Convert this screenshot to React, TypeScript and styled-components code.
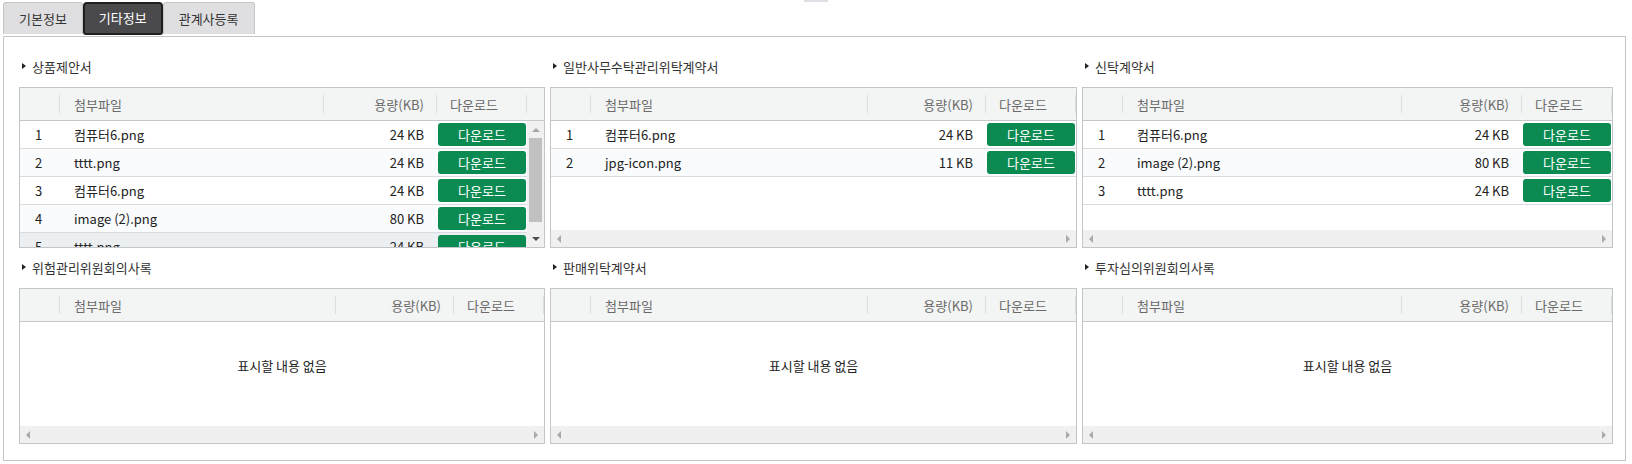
import React from 'react';
import styled, { createGlobalStyle, css } from 'styled-components';

const GlobalStyle = createGlobalStyle`
  html, body { margin: 0; padding: 0; background: #fff; }
  body {
    font-family: "Noto Sans CJK KR", "Noto Sans", sans-serif;
    font-size: 13px;
    color: #222;
  }
  * { box-sizing: border-box; }
`;

const Page = styled.div`
  position: relative;
  padding: 2px 6px 0 3px;
`;

const TopHandle = styled.div`
  position: absolute;
  top: 0;
  left: 50%;
  width: 24px;
  height: 2px;
  margin-left: -12px;
  background: #dde0e4;
`;

const TabBar = styled.div`
  display: flex;
  align-items: flex-start;
  height: 32px;
`;

const Tab = styled.button<{ $active?: boolean }>`
  height: 32px;
  padding: 0 15px;
  font: inherit;
  font-size: 13px;
  line-height: 1;
  cursor: pointer;
  border: 1px solid #c6c6c6;
  border-bottom: none;
  border-radius: 3px 3px 0 0;
  background: #dfdfe1;
  color: #333;
  ${(p) =>
    p.$active &&
    css`
      height: 33px;
      padding: 0 14px 3px;
      background: #4a4a4c;
      color: #fff;
      border: 2px solid #1f1f1f;
      border-radius: 4px 4px 3px 3px;
    `}
`;

const Panel = styled.div`
  margin-top: 2px;
  border: 1px solid #c4c4c4;
  padding: 19px 12px 16px 15px;
  display: grid;
  grid-template-columns: 526fr 527fr 531fr;
  column-gap: 5px;
  row-gap: 9px;
`;

const Section = styled.section`
  display: flex;
  flex-direction: column;
  min-width: 0;
`;

const SectionTitle = styled.h3`
  margin: 0 0 11px;
  height: 20px;
  display: flex;
  align-items: center;
  gap: 6px;
  padding-left: 3px;
  font-size: 13px;
  font-weight: normal;
  color: #333;
  &::before {
    content: '';
    border-left: 4px solid #222;
    border-top: 3.5px solid transparent;
    border-bottom: 3.5px solid transparent;
  }
`;

const GridBox = styled.div<{ $h: number }>`
  height: ${(p) => p.$h}px;
  border: 1px solid #c3c6c9;
  display: flex;
  flex-direction: column;
  background: #fff;
  overflow: hidden;
`;

type Kind = 'no' | 'name' | 'size' | 'dl';

const colStyles: Record<Kind, ReturnType<typeof css>> = {
  no: css`
    flex: 0 0 40px;
    padding-left: 15px;
  `,
  name: css`
    flex: 0 0 calc((100% - 130px) * 0.7);
    padding-left: 14px;
  `,
  size: css`
    flex: 1 1 0;
    justify-content: flex-end;
    padding-right: 13px;
  `,
  dl: css`
    flex: 0 0 90px;
    padding-left: 13px;
  `,
};

const HeadRow = styled.div<{ $scroll?: boolean }>`
  height: 33px;
  flex: none;
  display: flex;
  background: #f3f4f4;
  border-bottom: 1px solid #c5c8cb;
  color: #6a6a6a;
  padding-right: ${(p) => (p.$scroll ? 17 : 0)}px;
`;

const HeadCell = styled.div<{ $kind: Kind }>`
  position: relative;
  display: flex;
  align-items: center;
  min-width: 0;
  white-space: nowrap;
  ${(p) => colStyles[p.$kind]}
  &::after {
    content: '';
    position: absolute;
    right: 0;
    top: 7px;
    width: 1px;
    height: 18px;
    background: #dcdddf;
  }
`;

const Body = styled.div`
  flex: 1;
  display: flex;
  min-height: 0;
`;

const RowsArea = styled.div`
  flex: 1;
  min-width: 0;
  display: flex;
  flex-direction: column;
  overflow: hidden;
`;

const Rows = styled.div`
  flex: 1;
  min-height: 0;
  overflow: hidden;
`;

const Row = styled.div<{ $alt?: boolean; $hover?: boolean }>`
  height: 28px;
  display: flex;
  align-items: stretch;
  border-bottom: 1px solid #d9dcdf;
  background: ${(p) => (p.$hover ? '#eceff1' : p.$alt ? '#f9fbfd' : '#fff')};
  color: #222;
`;

const Cell = styled.div<{ $kind: Kind }>`
  display: flex;
  align-items: center;
  min-width: 0;
  white-space: nowrap;
  ${(p) => colStyles[p.$kind]}
  ${(p) =>
    p.$kind === 'dl' &&
    css`
      padding: 1px 1px 2px 1px;
    `}
`;

const DownloadButton = styled.button`
  width: 100%;
  height: 23px;
  border: none;
  border-radius: 3px;
  background: #0b8a52;
  color: #fff;
  font: inherit;
  font-size: 13px;
  padding: 0;
  cursor: pointer;
`;

const Empty = styled.div`
  flex: 1;
  display: flex;
  align-items: center;
  justify-content: center;
  padding-bottom: 17px;
  color: #222;
`;

const VScroll = styled.div`
  flex: 0 0 17px;
  display: flex;
  flex-direction: column;
  background: #f1f1f1;
`;

const ScrollBtn = styled.div`
  flex: 0 0 17px;
  display: flex;
  align-items: center;
  justify-content: center;
`;

const Thumb = styled.div`
  margin: 0 2px;
  height: 84px;
  background: #c1c1c1;
`;

const VTrack = styled.div`
  flex: 1;
`;

const HScroll = styled.div`
  flex: 0 0 17px;
  display: flex;
  align-items: center;
  justify-content: space-between;
  padding: 0 6px;
  background: #f0f0f0;
`;

const Arrow = styled.span<{ $dir: 'up' | 'down' | 'left' | 'right'; $color: string }>`
  width: 0;
  height: 0;
  ${({ $dir, $color }) => {
    switch ($dir) {
      case 'up':
        return css`
          border-left: 4px solid transparent;
          border-right: 4px solid transparent;
          border-bottom: 4px solid ${$color};
        `;
      case 'down':
        return css`
          border-left: 4px solid transparent;
          border-right: 4px solid transparent;
          border-top: 4px solid ${$color};
        `;
      case 'left':
        return css`
          border-top: 4px solid transparent;
          border-bottom: 4px solid transparent;
          border-right: 4px solid ${$color};
        `;
      default:
        return css`
          border-top: 4px solid transparent;
          border-bottom: 4px solid transparent;
          border-left: 4px solid ${$color};
        `;
    }
  }}
`;

type FileItem = { name: string; size: number };
type SectionData = { title: string; files: FileItem[]; vscroll?: boolean };

const sections: SectionData[] = [
  {
    title: '상품제안서',
    vscroll: true,
    files: [
      { name: '컴퓨터6.png', size: 24 },
      { name: 'tttt.png', size: 24 },
      { name: '컴퓨터6.png', size: 24 },
      { name: 'image (2).png', size: 80 },
      { name: 'tttt.png', size: 24 },
    ],
  },
  {
    title: '일반사무수탁관리위탁계약서',
    files: [
      { name: '컴퓨터6.png', size: 24 },
      { name: 'jpg-icon.png', size: 11 },
    ],
  },
  {
    title: '신탁계약서',
    files: [
      { name: '컴퓨터6.png', size: 24 },
      { name: 'image (2).png', size: 80 },
      { name: 'tttt.png', size: 24 },
    ],
  },
  { title: '위험관리위원회의사록', files: [] },
  { title: '판매위탁계약서', files: [] },
  { title: '투자심의위원회의사록', files: [] },
];

function FileGrid({ data, height }: { data: SectionData; height: number }) {
  const { files, vscroll } = data;
  return (
    <GridBox $h={height}>
      <HeadRow $scroll={vscroll}>
        <HeadCell $kind="no" />
        <HeadCell $kind="name">첨부파일</HeadCell>
        <HeadCell $kind="size">용량(KB)</HeadCell>
        <HeadCell $kind="dl">다운로드</HeadCell>
      </HeadRow>
      <Body>
        <RowsArea>
          {files.length === 0 ? (
            <Empty>표시할 내용 없음</Empty>
          ) : (
            <Rows>
              {files.map((f, i) => (
                <Row key={i} $alt={i % 2 === 1} $hover={vscroll && i === 4}>
                  <Cell $kind="no">{i + 1}</Cell>
                  <Cell $kind="name">{f.name}</Cell>
                  <Cell $kind="size">{f.size} KB</Cell>
                  <Cell $kind="dl">
                    <DownloadButton>다운로드</DownloadButton>
                  </Cell>
                </Row>
              ))}
            </Rows>
          )}
          {!vscroll && (
            <HScroll>
              <Arrow $dir="left" $color="#a9a9a9" />
              <Arrow $dir="right" $color="#a9a9a9" />
            </HScroll>
          )}
        </RowsArea>
        {vscroll && (
          <VScroll>
            <ScrollBtn>
              <Arrow $dir="up" $color="#a6a6a6" />
            </ScrollBtn>
            <Thumb />
            <VTrack />
            <ScrollBtn>
              <Arrow $dir="down" $color="#505050" />
            </ScrollBtn>
          </VScroll>
        )}
      </Body>
    </GridBox>
  );
}

export default function App() {
  return (
    <>
      <GlobalStyle />
      <Page>
        <TopHandle />
        <TabBar>
          <Tab>기본정보</Tab>
          <Tab $active>기타정보</Tab>
          <Tab>관계사등록</Tab>
        </TabBar>
        <Panel>
          {sections.map((s, i) => (
            <Section key={i}>
              <SectionTitle>{s.title}</SectionTitle>
              <FileGrid data={s} height={i < 3 ? 161 : 156} />
            </Section>
          ))}
        </Panel>
      </Page>
    </>
  );
}
